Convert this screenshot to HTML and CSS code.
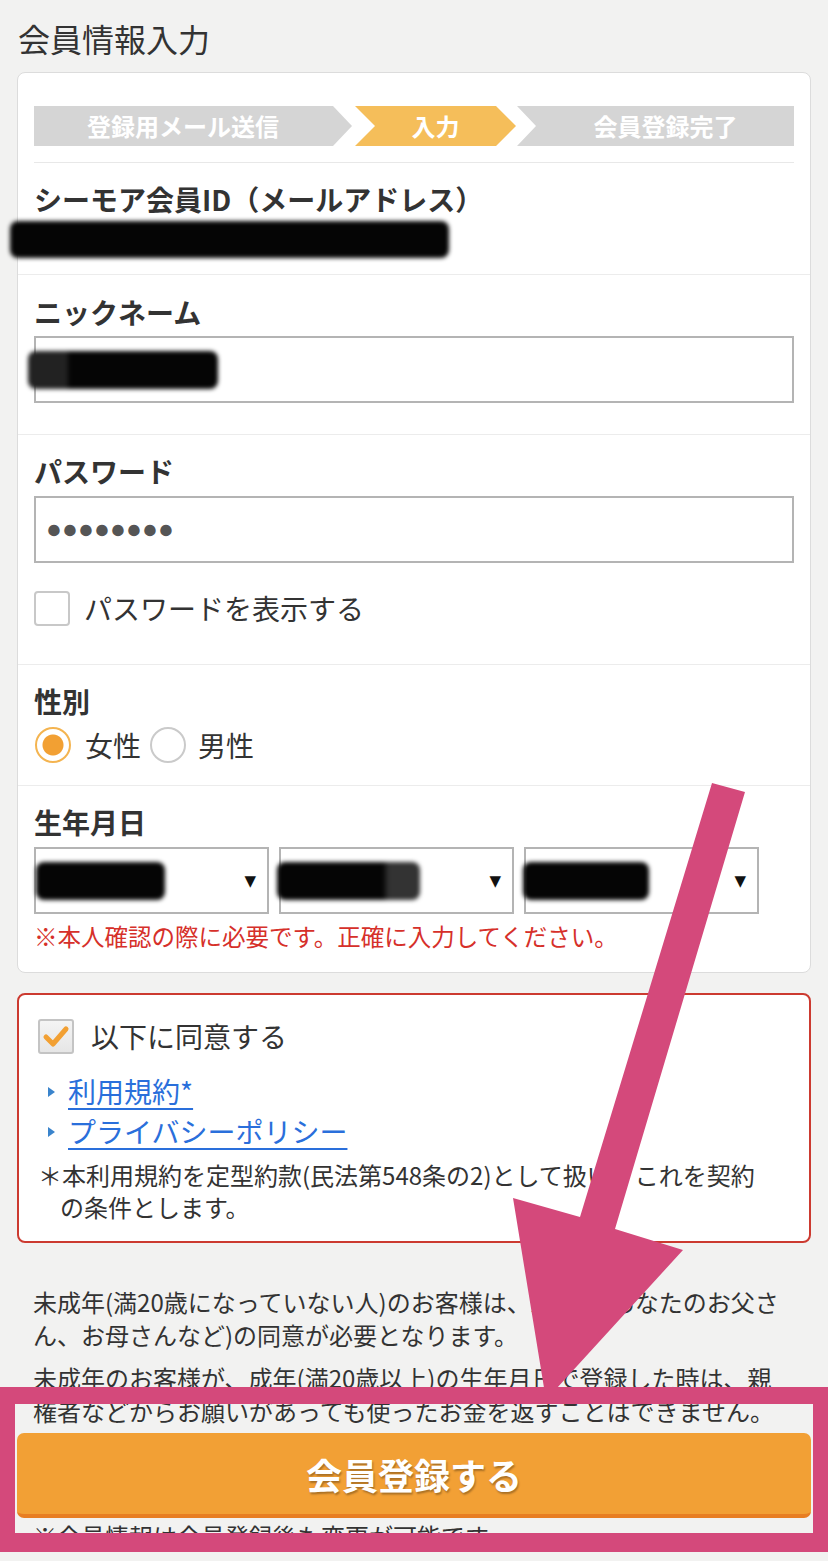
FILE: index.html
```html
<!DOCTYPE html>
<html lang="ja">
<head>
    <meta charset="UTF-8">
    <meta name="viewport" content="width=device-width, initial-scale=1.0">
    <title>会員情報入力</title>
    <link rel="stylesheet" href="styles.css">
</head>
<body>
    <h1 class="page-title">会員情報入力</h1>

    <div class="card">
        <div class="steps">
            <div class="step step-first">登録用メール送信</div>
            <div class="step step-mid active">入力</div>
            <div class="step step-last">会員登録完了</div>
        </div>

        <div class="section section-id">
            <div class="label">シーモア会員ID（メールアドレス）</div>
            <div class="id-value"><span class="redact redact-id"></span></div>
        </div>

        <div class="section section-nick">
            <div class="label">ニックネーム</div>
            <div class="field"><span class="redact redact-nick"></span></div>
        </div>

        <div class="section section-pass">
            <div class="label">パスワード</div>
            <div class="field"><span class="dots">●●●●●●●●</span></div>
            <div class="check-row">
                <span class="checkbox"></span>
                <span>パスワードを表示する</span>
            </div>
        </div>

        <div class="section section-sex">
            <div class="label">性別</div>
            <div class="radio-row">
                <span class="radio checked"></span>
                <span class="radio-text">女性</span>
                <span class="radio"></span>
                <span class="radio-text">男性</span>
            </div>
        </div>

        <div class="section section-birth">
            <div class="label">生年月日</div>
            <div class="selects">
                <div class="select"><span class="redact redact-year"></span><span class="caret">▼</span></div>
                <div class="select"><span class="redact redact-month"></span><span class="caret">▼</span></div>
                <div class="select"><span class="redact redact-day"></span><span class="caret">▼</span></div>
            </div>
            <p class="notice">※本人確認の際に必要です。正確に入力してください。</p>
        </div>
    </div>

    <div class="agree-box">
        <div class="agree-row">
            <span class="checkbox checked">
                <svg width="35" height="35" viewBox="0 0 35 35"><path d="M8 18 L15 25 L28 10" fill="none" stroke="#f2a033" stroke-width="5" stroke-linecap="round" stroke-linejoin="round"/></svg>
            </span>
            <span>以下に同意する</span>
        </div>
        <ul class="links">
            <li><a href="#">利用規約*</a></li>
            <li><a href="#">プライバシーポリシー</a></li>
        </ul>
        <p class="terms-note">＊本利用規約を定型約款(民法第548条の2)として扱い、これを契約の条件とします。</p>
    </div>

    <div class="info">
        <p>未成年(満20歳になっていない人)のお客様は、親権者(あなたのお父さん、お母さんなど)の同意が必要となります。</p>
        <p>未成年のお客様が、成年(満20歳以上)の生年月日で登録した時は、親権者などからお願いがあっても使ったお金を返すことはできません。</p>
    </div>

    <button class="submit">会員登録する</button>

    <div class="info after">
        <p>※会員情報は会員登録後も変更が可能です。</p>
    </div>

    <!-- annotation drawn over the screenshot -->
    <svg class="arrow" width="828" height="1561" viewBox="0 0 828 1561">
        <polygon points="712,783 745,792 615,1229 683,1250 546,1400 513,1198 580,1217" fill="#d4497b"/>
    </svg>
    <div class="frame"></div>
</body>
</html>
```

FILE: styles.css
```css
body {
    font-family: "Noto Sans CJK JP", sans-serif;
    margin: 0;
    padding: 0 17px;
    background-color: #f2f2f1;
    color: #333;
    position: relative;
    width: 794px;
    height: 1561px;
    overflow: hidden;
}
.page-title {
    margin: 0;
    padding: 18px 0 14px 1px;
    font-size: 32px;
    line-height: 40px;
    font-weight: normal;
    color: #333;
}
.card {
    background-color: white;
    border: 1px solid #dcdcdc;
    border-radius: 8px;
    padding-top: 33px;
}
.steps {
    display: flex;
    margin: 0 16px;
    height: 40px;
    padding-bottom: 16px;
    border-bottom: 1px solid #e8e8e8;
}
.step {
    height: 40px;
    line-height: 40px;
    background-color: #d5d5d5;
    color: white;
    font-weight: bold;
    font-size: 24px;
    text-align: center;
}
.step.active {
    background-color: #f5be5a;
}
.step-first {
    width: 318px;
    padding-right: 20px;
    box-sizing: border-box;
    clip-path: polygon(0 0, calc(100% - 19px) 0, 100% 50%, calc(100% - 19px) 100%, 0 100%);
}
.step-mid {
    width: 161px;
    margin-left: 3px;
    clip-path: polygon(0 0, calc(100% - 20px) 0, 100% 50%, calc(100% - 20px) 100%, 0 100%, 20px 50%);
}
.step-last {
    width: 277px;
    margin-left: 1px;
    padding-left: 20px;
    box-sizing: border-box;
    clip-path: polygon(0 0, 100% 0, 100% 100%, 0 100%, 19px 50%);
}
.section {
    padding: 20px 16px 0;
    border-bottom: 1px solid #ececec;
}
.section:last-child {
    border-bottom: none;
}
.label {
    font-size: 28px;
    font-weight: bold;
    line-height: 35px;
    color: #333;
}
.section-id {
    padding-top: 19px;
    padding-bottom: 16px;
}
.id-value {
    margin-top: 4px;
    height: 37px;
    display: flex;
}
.redact {
    display: block;
    background-color: #050505;
    filter: blur(2px);
    border-radius: 8px;
}
.redact-id {
    width: 439px;
    height: 37px;
    margin-left: -24px;
}
.section-nick {
    padding-bottom: 31px;
}
.field {
    margin-top: 6px;
    height: 63px;
    border: 2px solid #b4b4b4;
    display: flex;
    align-items: center;
    padding-left: 10px;
}
.redact-nick {
    width: 190px;
    height: 38px;
    margin-left: -18px;
    background: linear-gradient(90deg, #222 0, #222 20%, #050505 22%);
}
.section-pass {
    padding-top: 19px;
    padding-bottom: 38px;
}
.section-pass .field {
    margin-top: 7px;
}
.dots {
    font-family: "Liberation Sans", sans-serif;
    font-size: 26.5px;
    color: #555;
}
.check-row, .agree-row {
    display: flex;
    align-items: center;
    font-size: 28px;
    line-height: 35px;
    margin-top: 28px;
}
.checkbox {
    width: 32px;
    height: 31px;
    border: 2px solid #c8c8c8;
    border-radius: 4px;
    background-color: white;
    margin-right: 14px;
    flex-shrink: 0;
}
.section-sex {
    padding-top: 19px;
    padding-bottom: 22px;
}
.radio-row {
    display: flex;
    align-items: center;
    margin-top: 7px;
    height: 37px;
    font-size: 28px;
}
.radio {
    width: 32px;
    height: 32px;
    border: 2px solid #cacaca;
    border-radius: 50%;
    background-color: white;
    margin-right: 14px;
    margin-left: 1px;
}
.radio.checked {
    border-color: #f4b450;
    background: radial-gradient(circle, #f2a033 0, #f2a033 10px, white 11px);
}
.radio-text {
    margin-right: 9px;
}
.radio-text + .radio {
    margin-left: 0;
}
.radio-text + .radio {
    margin-right: 12px;
}
.section-birth {
    padding-top: 19px;
    padding-bottom: 21px;
}
.selects {
    display: flex;
    gap: 10px;
    margin-top: 7px;
}
.select {
    width: 235px;
    height: 67px;
    box-sizing: border-box;
    border: 2px solid #b4b4b4;
    display: flex;
    align-items: center;
    justify-content: space-between;
    padding-right: 11px;
}
.caret {
    font-family: "DejaVu Sans", sans-serif;
    font-size: 15px;
    color: #111;
}
.redact-year {
    width: 129px;
    height: 38px;
}
.redact-month {
    width: 143px;
    height: 38px;
    margin-left: -4px;
    background: linear-gradient(90deg, #050505 0, #050505 74%, #333 78%);
}
.redact-day {
    width: 126px;
    height: 38px;
    margin-left: -3px;
}
.notice {
    margin: 7px 0 0;
    font-size: 23.5px;
    line-height: 30px;
    color: #d6302a;
}
.agree-box {
    margin-top: 20px;
    background-color: white;
    border: 2px solid #cc3a30;
    border-radius: 8px;
    padding: 24px 40px 18px 19px;
    height: 250px;
    box-sizing: border-box;
}
.agree-row {
    margin-top: 0;
}
.agree-row .checkbox {
    background: linear-gradient(#f4f4f4, #e6e6e6);
    border-color: #c4c4c4;
    border-radius: 3px;
    margin-right: 17px;
    position: relative;
}
.agree-row .checkbox svg {
    position: absolute;
    left: -2px;
    top: -2px;
}
.links {
    list-style: none;
    margin: 17px 0 0;
    padding: 0 0 0 10px;
}
.links li {
    font-size: 28px;
    line-height: 40px;
}
.links li::before {
    content: "";
    display: inline-block;
    width: 0;
    height: 0;
    border-left: 7px solid #3a84cc;
    border-top: 5px solid transparent;
    border-bottom: 5px solid transparent;
    margin-right: 13px;
    vertical-align: 6px;
}
.links a {
    color: #2a6fdb;
    text-decoration: underline;
    text-decoration-thickness: 2px;
    text-underline-offset: 5px;
}
.terms-note {
    margin: 8px 0 0 22px;
    text-indent: -22px;
    font-size: 24px;
    line-height: 32px;
    color: #333;
}
.info {
    margin-top: 42px;
    padding: 0 28px 0 16px;
}
.info p {
    margin: 0 0 10px;
    font-size: 24px;
    line-height: 33px;
    color: #333;
}
.submit {
    display: block;
    width: 100%;
    height: 85px;
    margin-top: -4px;
    border: none;
    border-bottom: 4px solid #e87e22;
    border-radius: 7px;
    background-color: #f2a035;
    color: white;
    font-family: "Noto Sans CJK JP", sans-serif;
    font-size: 36px;
    font-weight: bold;
    text-shadow: 1px 2px 2px rgba(0, 0, 0, 0.3);
    cursor: pointer;
}
.info.after {
    margin-top: 1px;
}
.arrow {
    position: absolute;
    left: 0;
    top: 0;
    pointer-events: none;
}
.frame {
    position: absolute;
    left: 0;
    top: 1387px;
    width: 828px;
    height: 165px;
    box-sizing: border-box;
    border-style: solid;
    border-color: #d4497b;
    border-width: 17px 15px 19px 15px;
    pointer-events: none;
}
```
